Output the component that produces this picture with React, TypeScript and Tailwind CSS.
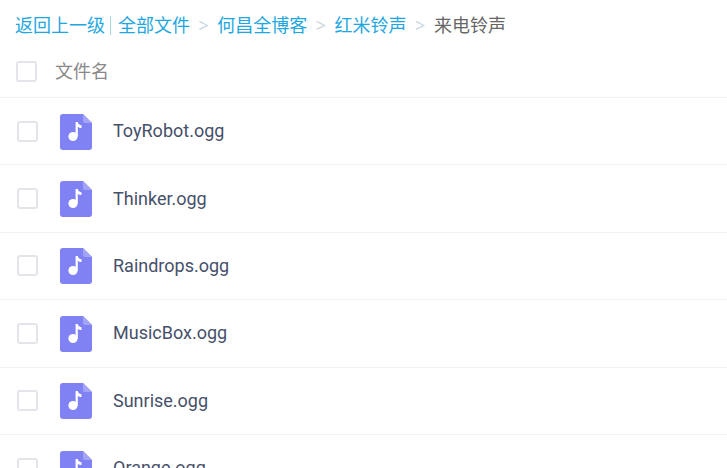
import React from "react";

const files = ["ToyRobot.ogg", "Thinker.ogg", "Raindrops.ogg", "MusicBox.ogg", "Sunrise.ogg", "Orange.ogg"];

const font = "font-['Noto_Sans','Noto_Sans_CJK_SC',sans-serif]";

const MusicIcon: React.FC = () => {
  return (
    <svg width="32" height="36" viewBox="0 0 32 36" className="block shrink-0">
      <path d="M3 0H23L32 9V33a3 3 0 0 1-3 3H3a3 3 0 0 1-3-3V3a3 3 0 0 1 3-3Z" fill="#8081f3" />
      <path d="M23 0L32 9H25a2 2 0 0 1-2-2Z" fill="#a3a4f7" />
      <circle cx="13" cy="22.500" r="4.600" fill="#fff" />
      <path d="M15.600 22.500V8h2.200c.4 2.200 1.800 3 3.700 3.200v2.800c-1.600 0-2.900-.5-3.700-1.300V22.500Z" fill="#fff" />
    </svg>
  );
};

const Check: React.FC = () => {
  return <span className="block w-[21px] h-[21px] shrink-0 rounded-[3px] border-2 border-[#e3e5eb] bg-white" />;
};

const Sep: React.FC = () => {
  return <span className="mx-[8.500px] text-[#c9d6e2] text-[18px]">&gt;</span>;
};

const App: React.FC = () => {
  return (
    <div className={`w-[727px] h-[468px] overflow-hidden bg-white ${font}`}>
      <div className="h-[50px] pl-[15px] flex items-center text-[18px] whitespace-nowrap text-[#1ea7e1]">
        <span>返回上一级</span>
        <span className="ml-[5px] mr-[7px] w-px h-[19px] bg-[#a8d4ea]" />
        <span>全部文件</span>
        <Sep />
        <span>何昌全博客</span>
        <Sep />
        <span>红米铃声</span>
        <Sep />
        <span className="text-[#666666]">来电铃声</span>
      </div>
      <div className="h-[48px] pl-[16px] pb-[4px] flex items-center border-b border-[#f0f2f7]">
        <Check />
        <span className="ml-[18px] text-[18px] text-[#888888]">文件名</span>
      </div>
      {files.map((name) => (
        <div key={name} className="h-[67.4px] pl-[17px] flex items-center border-b border-[#f0f2f7]">
          <Check />
          <div className="ml-[22px] mt-[1px]">
            <MusicIcon />
          </div>
          <span className="ml-[21px] font-['Roboto','Noto_Sans_CJK_SC',sans-serif] text-[18px] leading-[24px] text-[#46506a] whitespace-nowrap">{name}</span>
        </div>
      ))}
    </div>
  );
};

export default App;
